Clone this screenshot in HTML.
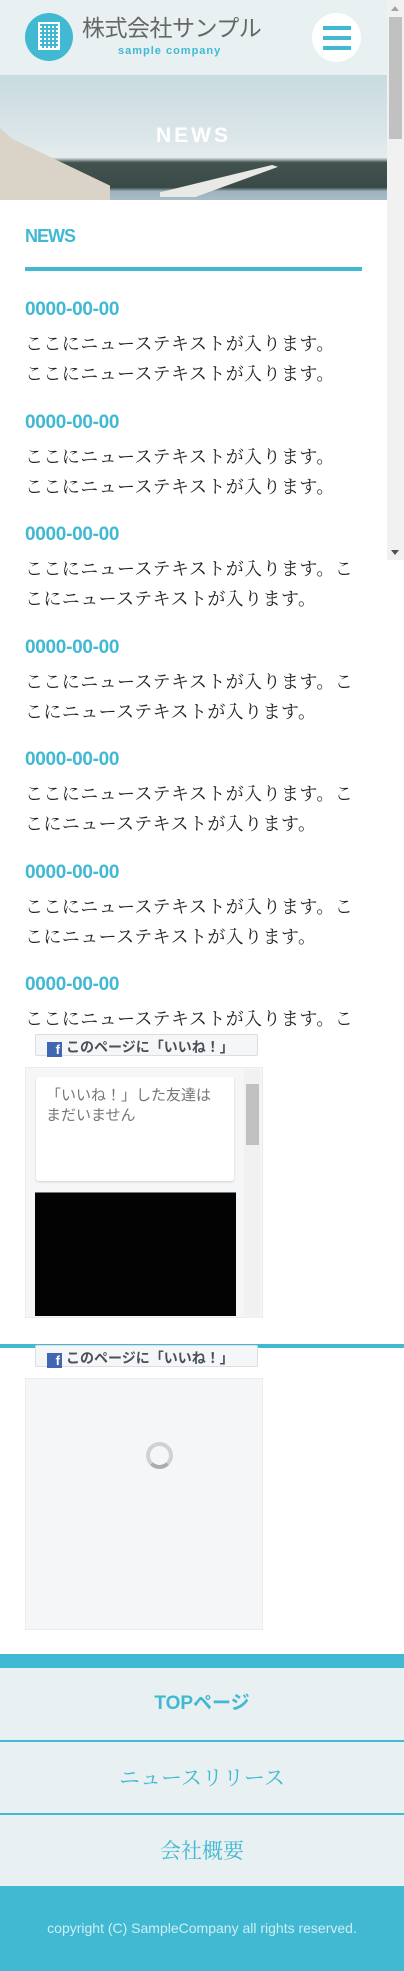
<!DOCTYPE html>
<html><head><meta charset="utf-8"><style>
*{margin:0;padding:0;box-sizing:border-box}
body{width:404px;height:1971px;position:relative;overflow:hidden;background:#fff;font-family:"Liberation Sans","Noto Sans CJK JP",sans-serif}
.a{position:absolute}
.date{position:absolute;left:25px;font:bold 19px "Liberation Sans",sans-serif;color:#41b9d2;letter-spacing:-0.3px}
.txt{position:absolute;left:25px;width:340px;font:18px/30px "Liberation Serif","Noto Serif CJK JP",serif;color:#222;letter-spacing:0.4px}
.fbbtn{position:absolute;left:35px;width:223px;height:22px;background:#f5f6f7;border:1px solid #dadde1;border-radius:2px;font:bold 14px "Liberation Sans","Noto Sans CJK JP",sans-serif;color:#4b4f56;padding:2px 0 0 11px;white-space:nowrap}
.fbbtn i{display:inline-block;width:15px;height:15px;background:#4267b2;color:#fff;font:bold 13px "Liberation Sans";font-style:normal;text-align:right;padding-right:2px;vertical-align:-2px;margin-right:4px}
.nav{position:absolute;left:0;width:404px;height:72px;background:#e8f0f2;text-align:center;color:#41b9d2;line-height:72px;font-size:21px}
</style></head><body>
<div class="a" style="left:0;top:0;width:387px;height:75px;background:#e8f0f2"></div>
<div class="a" style="left:25px;top:13px;width:48px;height:48px;border-radius:50%;background:#41b9d2"></div>
<div class="a" style="left:38px;top:22px;width:22px;height:28px;border:2px solid #fff;background:repeating-linear-gradient(90deg,transparent 0 2px,#41b9d2 2px 4px),repeating-linear-gradient(0deg,#fff 0 2px,#41b9d2 2px 4px)"></div>
<div class="a" style="left:82px;top:14px;font:23px/28px 'Liberation Sans','Noto Sans CJK JP',sans-serif;color:#666;letter-spacing:-0.5px">株式会社サンプル</div>
<div class="a" style="left:118px;top:45px;font:bold 11px 'Liberation Sans',sans-serif;color:#41b9d2;letter-spacing:1px">sample company</div>
<div class="a" style="left:312px;top:13px;width:49px;height:49px;border-radius:50%;background:#fff"></div>
<div class="a" style="left:323px;top:26px;width:28px;height:4px;background:#41b9d2;box-shadow:0 10px 0 #41b9d2,0 20px 0 #41b9d2"></div>
<div class="a" style="left:0;top:75px;width:387px;height:125px;background:linear-gradient(180deg,#c8dbe0 0%,#dbe6e9 50%,#e6ecee 66%,#42534f 70%,#3a4a46 90%,#9db3bf 93%,#a8bcc6 100%)"></div>
<div class="a" style="left:0;top:128px;width:110px;height:72px;background:#d9d3c8;clip-path:polygon(0 0,10% 14%,100% 80%,100% 100%,0 100%)"></div>
<div class="a" style="left:160px;top:165px;width:118px;height:32px;background:#e9e9e7;clip-path:polygon(0 85%,95% 0,100% 6%,30% 100%,0 100%)"></div>
<div class="a" style="left:0;top:124px;width:387px;text-align:center;font:bold 21px 'Liberation Sans';color:#fff;letter-spacing:3px">NEWS</div>
<div class="a" style="left:387px;top:0;width:17px;height:560px;background:#f1f1f1"></div>
<div class="a" style="left:389px;top:17px;width:13px;height:122px;background:#c1c1c1"></div>
<div class="a" style="left:391px;top:6px;border:4px solid transparent;border-bottom:5px solid #a3a3a3;border-top:0"></div>
<div class="a" style="left:391px;top:550px;border:4px solid transparent;border-top:5px solid #505050;border-bottom:0"></div>
<div class="a" style="left:25px;top:226px;font:bold 18px 'Liberation Sans';color:#41b9d2;letter-spacing:-1px">NEWS</div>
<div class="a" style="left:25px;top:267px;width:337px;height:4px;background:#41b9d2"></div>

<div class="date" style="top:299px">0000-00-00</div>
<div class="txt" style="top:329px">ここにニューステキストが入ります。<br>ここにニューステキストが入ります。</div>
<div class="date" style="top:412px">0000-00-00</div>
<div class="txt" style="top:442px">ここにニューステキストが入ります。<br>ここにニューステキストが入ります。</div>
<div class="date" style="top:524px">0000-00-00</div>
<div class="txt" style="top:554px">ここにニューステキストが入ります。こ<br>こにニューステキストが入ります。</div>
<div class="date" style="top:637px">0000-00-00</div>
<div class="txt" style="top:667px">ここにニューステキストが入ります。こ<br>こにニューステキストが入ります。</div>
<div class="date" style="top:749px">0000-00-00</div>
<div class="txt" style="top:779px">ここにニューステキストが入ります。こ<br>こにニューステキストが入ります。</div>
<div class="date" style="top:862px">0000-00-00</div>
<div class="txt" style="top:892px">ここにニューステキストが入ります。こ<br>こにニューステキストが入ります。</div>
<div class="date" style="top:974px">0000-00-00</div>
<div class="txt" style="top:1004px">ここにニューステキストが入ります。こ</div>

<div class="a" style="left:0;top:1035px;width:404px;height:310px;background:#fff"></div>
<div class="fbbtn" style="top:1034px"><i>f</i>このページに「いいね！」</div>
<div class="a" style="left:25px;top:1067px;width:238px;height:251px;background:#f5f6f7;border:1px solid #e9ebee"></div>
<div class="a" style="left:36px;top:1077px;width:198px;height:104px;background:#fff;border-radius:3px;box-shadow:0 1px 2px rgba(0,0,0,.15);padding:9px 10px;font:15px/20px 'Liberation Sans','Noto Sans CJK JP',sans-serif;color:#777">「いいね！」した友達は<br>まだいません</div>
<div class="a" style="left:35px;top:1192px;width:201px;height:124px;background:#030303;border-top:1px solid #777"></div>
<div class="a" style="left:244px;top:1069px;width:16px;height:249px;background:#f1f1f1"></div>
<div class="a" style="left:246px;top:1084px;width:13px;height:61px;background:#c1c1c1"></div>
<div class="a" style="left:0;top:1344px;width:404px;height:4px;background:#41b9d2"></div>
<div class="a" style="left:0;top:1348px;width:404px;height:300px;background:#fff"></div>
<div class="fbbtn" style="top:1345px"><i>f</i>このページに「いいね！」</div>
<div class="a" style="left:25px;top:1378px;width:238px;height:252px;background:#f5f6f7;border:1px solid #e9ebee"></div>
<div class="a" style="left:146px;top:1442px;width:27px;height:27px;border-radius:50%;border:4px solid #cfd1d4;border-bottom-color:#a9adb2"></div>

<div class="a" style="left:0;top:1654px;width:404px;height:14px;background:#41b9d2"></div>
<div class="nav" style="top:1668px;font:bold 19px/72px 'Liberation Sans','Noto Sans CJK JP',sans-serif;color:#41b9d2">TOPページ</div>
<div class="a" style="left:0;top:1740px;width:404px;height:2px;background:#41b9d2"></div>
<div class="nav" style="top:1742px;font-family:'Liberation Serif','Noto Serif CJK JP',serif">ニュースリリース</div>
<div class="a" style="left:0;top:1813px;width:404px;height:2px;background:#41b9d2"></div>
<div class="nav" style="top:1815px;font-family:'Liberation Serif','Noto Serif CJK JP',serif">会社概要</div>
<div class="a" style="left:0;top:1886px;width:404px;height:85px;background:#41b9d2;text-align:center;font:14px/85px 'Liberation Sans',sans-serif;color:#cdeef5">copyright (C) SampleCompany all rights reserved.</div>
</body></html>
